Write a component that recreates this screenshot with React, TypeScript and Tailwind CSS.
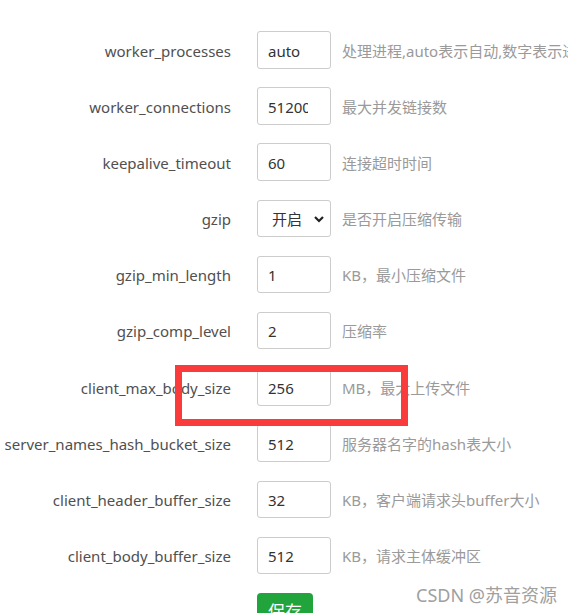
import React from "react";

const rows: { label: string; value: string; hint: string; select?: boolean }[] = [
  { label: "worker_processes", value: "auto", hint: "处理进程,auto表示自动,数字表示进程数" },
  { label: "worker_connections", value: "51200", hint: "最大并发链接数" },
  { label: "keepalive_timeout", value: "60", hint: "连接超时时间" },
  { label: "gzip", value: "开启", hint: "是否开启压缩传输", select: true },
  { label: "gzip_min_length", value: "1", hint: "KB，最小压缩文件" },
  { label: "gzip_comp_level", value: "2", hint: "压缩率" },
  { label: "client_max_body_size", value: "256", hint: "MB，最大上传文件" },
  { label: "server_names_hash_bucket_size", value: "512", hint: "服务器名字的hash表大小" },
  { label: "client_header_buffer_size", value: "32", hint: "KB，客户端请求头buffer大小" },
  { label: "client_body_buffer_size", value: "512", hint: "KB，请求主体缓冲区" },
];

const font = { fontFamily: '"Noto Sans", "Noto Sans CJK SC", sans-serif' };

export default function App() {
  return (
    <div
      className="relative w-[568px] h-[613px] overflow-hidden bg-white"
      style={font}
    >
      <div className="pt-[31px] flex flex-col gap-[18.7px]">
        {rows.map((r) => (
          <div key={r.label} className="flex items-center h-[37.5px]">
            <div className="w-[232px] shrink-0 text-right text-[15px] text-[#505050] whitespace-nowrap pr-px pt-[2px]">
              {r.label}
            </div>
            <div className="ml-[25px] w-[74px] h-[37.5px] shrink-0 border border-[#ccc] rounded-[3px] flex items-center pl-[10px] text-[15px] text-[#333] whitespace-nowrap pt-[2px]">
              {r.select ? (
                <div className="flex items-center w-full pl-[4px] pr-[5px] justify-between">
                  <span>{r.value}</span>
                  <svg width="12" height="12" viewBox="0 0 12 12">
                    <path d="M2 4l4 4 4-4" fill="none" stroke="#222" strokeWidth="2.2" />
                  </svg>
                </div>
              ) : (
                <span className="block w-[40px] overflow-hidden">{r.value}</span>
              )}
            </div>
            <div className="ml-[11px] text-[15px] text-[#9a9a9a] whitespace-nowrap pt-[2px]">
              {r.hint}
            </div>
          </div>
        ))}
        <div className="flex">
          <div className="ml-[257px] w-[56px] h-[40px] bg-[#22a43c] rounded-[4px] text-white text-[17px] flex justify-center pt-[6px]">
            保存
          </div>
        </div>
      </div>
      <div className="absolute left-[175px] top-[365px] w-[233px] h-[61px] border-[7px] border-[#fa3b3b]" />
      <div className="absolute left-[416px] top-[582px] text-[18px] text-[#a0a0a0] whitespace-nowrap">
        CSDN @苏音资源
      </div>
    </div>
  );
}
